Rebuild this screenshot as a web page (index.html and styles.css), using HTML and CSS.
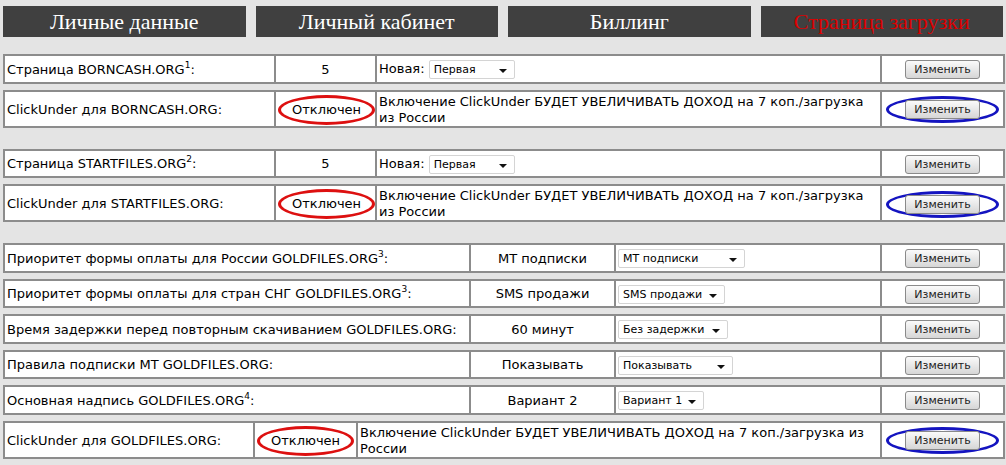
FILE: index.html
```html
<!DOCTYPE html>
<html lang="ru">
  <head>
    <meta charset="UTF-8" />
    <title>Страница загрузки</title>
    <link rel="stylesheet" href="styles.css">
  </head>
  <body>
    <div class="tabs">
      <div class="tab">Личные данные</div>
      <div class="tab">Личный кабинет</div>
      <div class="tab">Биллинг</div>
      <div class="tab active">Страница загрузки</div>
    </div>

    <!-- BORNCASH -->
    <div class="group">
      <table class="row cols-a">
        <colgroup><col class="c1"><col class="c2"><col class="c3"><col class="c4"></colgroup>
        <tr>
          <td>Страница BORNCASH.ORG<sup>1</sup>:</td>
          <td class="center">5</td>
          <td>Новая: <span class="select w86">Первая</span></td>
          <td class="center"><button class="btn">Изменить</button></td>
        </tr>
      </table>
      <table class="row cols-a">
        <colgroup><col class="c1"><col class="c2"><col class="c3"><col class="c4"></colgroup>
        <tr class="tall">
          <td>ClickUnder для BORNCASH.ORG:</td>
          <td class="center"><span class="mark-red">Отключен</span></td>
          <td>Включение ClickUnder БУДЕТ УВЕЛИЧИВАТЬ ДОХОД на 7 коп./загрузка из России</td>
          <td class="center"><span class="mark-blue"><button class="btn">Изменить</button></span></td>
        </tr>
      </table>
    </div>

    <!-- STARTFILES -->
    <div class="group">
      <table class="row cols-a">
        <colgroup><col class="c1"><col class="c2"><col class="c3"><col class="c4"></colgroup>
        <tr>
          <td>Страница STARTFILES.ORG<sup>2</sup>:</td>
          <td class="center">5</td>
          <td>Новая: <span class="select w86">Первая</span></td>
          <td class="center"><button class="btn">Изменить</button></td>
        </tr>
      </table>
      <table class="row cols-a">
        <colgroup><col class="c1"><col class="c2"><col class="c3"><col class="c4"></colgroup>
        <tr class="tall">
          <td>ClickUnder для STARTFILES.ORG:</td>
          <td class="center"><span class="mark-red">Отключен</span></td>
          <td>Включение ClickUnder БУДЕТ УВЕЛИЧИВАТЬ ДОХОД на 7 коп./загрузка из России</td>
          <td class="center"><span class="mark-blue"><button class="btn">Изменить</button></span></td>
        </tr>
      </table>
    </div>

    <!-- GOLDFILES -->
    <div class="group">
      <table class="row cols-b">
        <colgroup><col class="c1"><col class="c2"><col class="c3"><col class="c4"></colgroup>
        <tr>
          <td>Приоритет формы оплаты для России GOLDFILES.ORG<sup>3</sup>:</td>
          <td class="center">МТ подписки</td>
          <td><span class="select w127">МТ подписки</span></td>
          <td class="center"><button class="btn">Изменить</button></td>
        </tr>
      </table>
      <table class="row cols-b">
        <colgroup><col class="c1"><col class="c2"><col class="c3"><col class="c4"></colgroup>
        <tr>
          <td>Приоритет формы оплаты для стран СНГ GOLDFILES.ORG<sup>3</sup>:</td>
          <td class="center">SMS продажи</td>
          <td><span class="select w107">SMS продажи</span></td>
          <td class="center"><button class="btn">Изменить</button></td>
        </tr>
      </table>
      <table class="row cols-b">
        <colgroup><col class="c1"><col class="c2"><col class="c3"><col class="c4"></colgroup>
        <tr>
          <td>Время задержки перед повторным скачиванием GOLDFILES.ORG:</td>
          <td class="center">60 минут</td>
          <td><span class="select w110">Без задержки</span></td>
          <td class="center"><button class="btn">Изменить</button></td>
        </tr>
      </table>
      <table class="row cols-b">
        <colgroup><col class="c1"><col class="c2"><col class="c3"><col class="c4"></colgroup>
        <tr>
          <td>Правила подписки МТ GOLDFILES.ORG:</td>
          <td class="center">Показывать</td>
          <td><span class="select w115">Показывать</span></td>
          <td class="center"><button class="btn">Изменить</button></td>
        </tr>
      </table>
      <table class="row cols-b">
        <colgroup><col class="c1"><col class="c2"><col class="c3"><col class="c4"></colgroup>
        <tr>
          <td>Основная надпись GOLDFILES.ORG<sup>4</sup>:</td>
          <td class="center">Вариант 2</td>
          <td><span class="select w86">Вариант 1</span></td>
          <td class="center"><button class="btn">Изменить</button></td>
        </tr>
      </table>
      <table class="row cols-c">
        <colgroup><col class="c1"><col class="c2"><col class="c3"><col class="c4"></colgroup>
        <tr class="tall">
          <td>ClickUnder для GOLDFILES.ORG:</td>
          <td class="center"><span class="mark-red">Отключен</span></td>
          <td>Включение ClickUnder БУДЕТ УВЕЛИЧИВАТЬ ДОХОД на 7 коп./загрузка из России</td>
          <td class="center"><span class="mark-blue"><button class="btn">Изменить</button></span></td>
        </tr>
      </table>
    </div>
  </body>
</html>
```

FILE: styles.css
```css
* {
  box-sizing: border-box;
}

body {
  margin: 0;
  padding: 6px 3px 0;
  background: #e4e4e4;
  font-family: "DejaVu Sans", Verdana, sans-serif;
  font-size: 13px;
  color: #000;
}

/* Top tabs */
.tabs {
  display: flex;
  gap: 10px;
  width: 1000px;
  margin-bottom: 17px;
}
.tab {
  flex: 1;
  height: 31px;
  line-height: 31px;
  background: #404040;
  color: #fff;
  text-align: center;
  font-family: "Liberation Serif", "Times New Roman", serif;
  font-size: 22px;
}
.tab.active {
  color: #dc0000;
}

/* Settings rows */
.group {
  padding-bottom: 15px;
}
.row {
  width: 1000px;
  table-layout: fixed;
  border-collapse: collapse;
  background: #fff;
  margin-bottom: 6px;
}
.row td {
  border: 2px solid #8c8c8c;
  padding: 2px 2px 0;
  height: 27.5px;
  line-height: 16px;
  vertical-align: middle;
}
.row tr.tall td {
  height: 35px;
}
.row .center {
  text-align: center;
}
sup {
  font-size: 9px;
  line-height: 0;
  vertical-align: 6px;
}

.cols-a .c1 { width: 271px; }
.cols-a .c2 { width: 101px; }
.cols-a .c3 { width: 505px; }
.cols-a .c4 { width: 123px; }

.cols-b .c1 { width: 466px; }
.cols-b .c2 { width: 145px; }
.cols-b .c3 { width: 266px; }
.cols-b .c4 { width: 123px; }

.cols-c .c1 { width: 250px; }
.cols-c .c2 { width: 103px; }
.cols-c .c3 { width: 524px; }
.cols-c .c4 { width: 123px; }

/* Fake dropdowns */
.select {
  position: relative;
  display: inline-block;
  height: 19px;
  line-height: 17px;
  padding: 0 20px 0 4px;
  border: 1px solid #d4d4d4;
  border-radius: 2px;
  background: #fff;
  font-size: 11px;
  text-align: left;
  vertical-align: middle;
}
.select::after {
  content: "";
  position: absolute;
  right: 7px;
  top: 8px;
  border-left: 4px solid transparent;
  border-right: 4px solid transparent;
  border-top: 4px solid #111;
}
.w86 { width: 86px; }
.w107 { width: 107px; }
.w110 { width: 110px; }
.w115 { width: 115px; }
.w127 { width: 127px; }

/* Buttons */
.btn {
  width: 75px;
  height: 19px;
  padding: 0;
  border: 1px solid #8a8a8a;
  border-radius: 3px;
  background: linear-gradient(#fafafa, #e8e8e8 50%, #d6d6d6);
  font-family: "DejaVu Sans", Verdana, sans-serif;
  font-size: 11px;
  color: #222;
  vertical-align: middle;
}

/* Hand-drawn highlight marks */
.mark-red {
  display: inline-block;
  padding: 4px 11px;
  border: 3px solid #dd1010;
  border-radius: 50%;
}
.mark-blue {
  display: inline-block;
  padding: 1px 16px;
  border: 3px solid #1414c0;
  border-radius: 50%;
  line-height: 0;
}
```
